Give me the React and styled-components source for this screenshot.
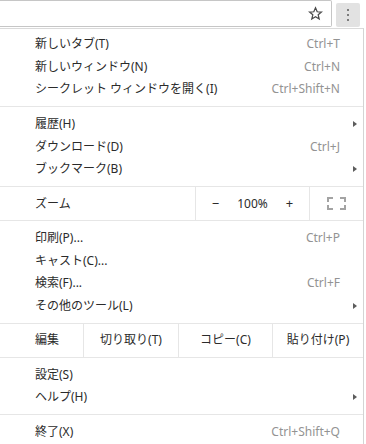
import React from 'react'
import styled, { createGlobalStyle } from 'styled-components'

const GlobalStyle = createGlobalStyle`
  html, body {
    margin: 0;
    padding: 0;
    background: #ffffff;
  }
  body {
    font-family: "Noto Sans", "Noto Sans CJK JP", sans-serif;
    font-size: 12px;
    color: #2b2b2b;
    overflow: hidden;
  }
`

const Page = styled.div`
  width: 366px;
  height: 444px;
  position: relative;
  overflow: hidden;
`

const Toolbar = styled.div`
  display: flex;
  align-items: flex-start;
  height: 28px;
`

const Omnibox = styled.div`
  flex: 1;
  height: 27px;
  box-sizing: border-box;
  border: 1px solid #c6c6c6;
  border-left: none;
  border-radius: 0 2px 2px 0;
  display: flex;
  align-items: center;
  justify-content: flex-end;
  padding-right: 8px;
  margin-left: -1px;
`

const MenuButton = styled.div`
  width: 24px;
  height: 24px;
  margin: 3px 6px 0 4px;
  background: #e2e2e2;
  border-radius: 2px;
  display: flex;
  flex-direction: column;
  align-items: center;
  justify-content: center;
  gap: 3px;
`

const Dot = styled.span`
  width: 2px;
  height: 2px;
  border-radius: 1px;
  background: #5a5a5a;
`

const Menu = styled.div`
  width: 364px;
  box-sizing: border-box;
  border-top: 1px solid #dadada;
  border-right: 1px solid #d4d4d4;
  background: #ffffff;
`

const Group = styled.div`
  padding: ${p => (p.$first ? '4px' : '6px')} 0 5.5px;
  border-top: ${p => (p.$first ? 'none' : '1px solid #e6e6e6')};
`

const Row = styled.div`
  display: grid;
  grid-template-columns: 1fr auto 23px;
  align-items: center;
  height: 22.5px;
  padding-left: 35px;
  white-space: nowrap;
`

const Label = styled.span`
  line-height: 1;
  color: #2b2b2b;
`

const Shortcut = styled.span`
  line-height: 1;
  color: #939393;
`

const ArrowCell = styled.span`
  display: flex;
  justify-content: flex-end;
  padding-right: 6px;
`

const Arrow = styled.span`
  width: 0;
  height: 0;
  border-top: 3.5px solid transparent;
  border-bottom: 3.5px solid transparent;
  border-left: 4px solid #5c5c5c;
`

const ButtonRow = styled.div`
  display: grid;
  grid-template-columns: ${p => p.$columns};
  height: 33px;
  border-top: 1px solid #e6e6e6;
`

const Cell = styled.div`
  display: flex;
  align-items: center;
  justify-content: ${p => (p.$left ? 'flex-start' : 'center')};
  padding-left: ${p => (p.$left ? '35px' : '0')};
  border-left: ${p => (p.$left ? 'none' : '1px solid #e6e6e6')};
  white-space: nowrap;
  line-height: 1;
`

const ZoomStep = styled.span`
  width: 24px;
  text-align: center;
  font-size: 13px;
  color: #2b2b2b;
`

const ZoomValue = styled.span`
  width: 50px;
  text-align: center;
  color: #2b2b2b;
`

const StarIcon = () => (
  <svg width="15" height="15" viewBox="0 0 24 24">
    <polygon
      points="12,2.8 14.7,9.2 21.5,9.7 16.3,14.1 17.9,20.8 12,17.2 6.1,20.8 7.7,14.1 2.5,9.7 9.3,9.2"
      fill="none"
      stroke="#4a4a4a"
      strokeWidth="2"
      strokeLinejoin="miter"
    />
  </svg>
)

const FullscreenIcon = () => (
  <svg width="19" height="13" viewBox="0 0 19 13">
    <g fill="none" stroke="#a3a3a3" strokeWidth="2">
      <polyline points="1,5 1,1 6,1" />
      <polyline points="13,1 18,1 18,5" />
      <polyline points="1,8 1,12 6,12" />
      <polyline points="13,12 18,12 18,8" />
    </g>
  </svg>
)

const MenuItem = ({ label, shortcut, submenu }) => (
  <Row>
    <Label>{label}</Label>
    <Shortcut>{shortcut}</Shortcut>
    <ArrowCell>{submenu && <Arrow />}</ArrowCell>
  </Row>
)

const groups = [
  [
    { label: '新しいタブ(T)', shortcut: 'Ctrl+T' },
    { label: '新しいウィンドウ(N)', shortcut: 'Ctrl+N' },
    { label: 'シークレット ウィンドウを開く(I)', shortcut: 'Ctrl+Shift+N' },
  ],
  [
    { label: '履歴(H)', submenu: true },
    { label: 'ダウンロード(D)', shortcut: 'Ctrl+J' },
    { label: 'ブックマーク(B)', submenu: true },
  ],
  [
    { label: '印刷(P)...', shortcut: 'Ctrl+P' },
    { label: 'キャスト(C)...' },
    { label: '検索(F)...', shortcut: 'Ctrl+F' },
    { label: 'その他のツール(L)', submenu: true },
  ],
  [
    { label: '設定(S)' },
    { label: 'ヘルプ(H)', submenu: true },
  ],
  [{ label: '終了(X)', shortcut: 'Ctrl+Shift+Q' }],
]

const renderGroup = (items, first) => (
  <Group $first={first}>
    {items.map(item => (
      <MenuItem key={item.label} {...item} />
    ))}
  </Group>
)

export default function App() {
  return (
    <Page>
      <GlobalStyle />
      <Toolbar>
        <Omnibox>
          <StarIcon />
        </Omnibox>
        <MenuButton>
          <Dot />
          <Dot />
          <Dot />
        </MenuButton>
      </Toolbar>
      <Menu>
        {renderGroup(groups[0], true)}
        {renderGroup(groups[1])}
        <ButtonRow $columns="195px 114px 1fr">
          <Cell $left>ズーム</Cell>
          <Cell>
            <ZoomStep>−</ZoomStep>
            <ZoomValue>100%</ZoomValue>
            <ZoomStep>+</ZoomStep>
          </Cell>
          <Cell>
            <FullscreenIcon />
          </Cell>
        </ButtonRow>
        {renderGroup(groups[2])}
        <ButtonRow $columns="83px 95px 94px 1fr">
          <Cell $left>編集</Cell>
          <Cell>切り取り(T)</Cell>
          <Cell>コピー(C)</Cell>
          <Cell>貼り付け(P)</Cell>
        </ButtonRow>
        {renderGroup(groups[3])}
        {renderGroup(groups[4])}
      </Menu>
    </Page>
  )
}
